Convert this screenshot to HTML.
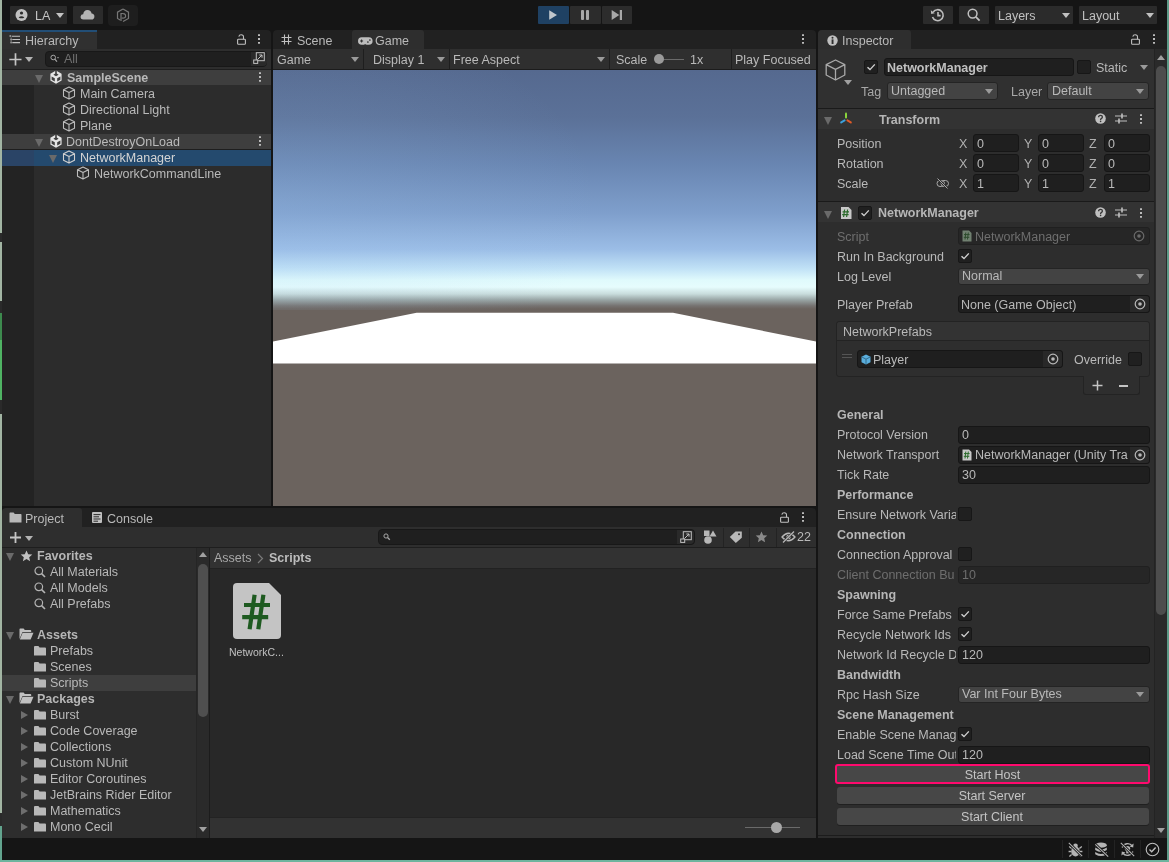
<!DOCTYPE html>
<html><head><meta charset="utf-8">
<style>
*{margin:0;padding:0;box-sizing:border-box}
html,body{width:1169px;height:862px;overflow:hidden;background:#151515}
body{position:relative;will-change:transform;font-family:"Liberation Sans",sans-serif;font-size:12.5px;color:#b9b9b9}
.a{position:absolute}
.t{position:absolute;white-space:nowrap;line-height:18px}
.b{font-weight:bold;color:#b6b6b6}
.btn{position:absolute;background:#2c2c2c;border-radius:1px}
.tri{position:absolute;width:0;height:0;border-left:4px solid transparent;border-right:4px solid transparent;border-top:5px solid #9a9a9a}
.trir{position:absolute;width:0;height:0;border-top:4.5px solid transparent;border-bottom:4.5px solid transparent;border-left:7px solid #6e6e6e}
.trid{position:absolute;width:0;height:0;border-left:4.5px solid transparent;border-right:4.5px solid transparent;border-top:8px solid #6a6a6a;margin-top:1px}
.fld{position:absolute;background:#1f1f1f;border-radius:3px;border:1px solid #161616}
.dd{position:absolute;background:#434343;border-radius:3px;border:1px solid #242424}
.cb{position:absolute;width:14px;height:14px;background:#202020;border:1px solid #171717;border-radius:2px}
.dots{position:absolute;width:2px;height:10px;margin-left:0.5px;background:repeating-linear-gradient(180deg,#bcbcbc 0 2px,transparent 2px 4px);border-radius:1px}
svg{position:absolute;overflow:visible}
</style></head><body>
<!-- window borders -->
<div class="a" style="left:0;top:0;width:2px;height:862px;background:linear-gradient(180deg,#a2b5a3 0 233px,#2a2a2a 233px 242px,#a2b5a3 242px 301px,#2a2a2a 301px 313px,#3d8a4e 313px 340px,#4fb363 340px 400px,#2a2a2a 400px 414px,#a2b5a3 414px 813px,#2a2a2a 813px 826px,#62a48e 826px 862px)"></div>
<div class="a" style="left:1167px;top:0;width:2px;height:862px;background:#5e9a88"></div>
<div class="a" style="left:0;top:860px;width:1169px;height:2px;background:#6db49e"></div>

<!-- MAIN TOOLBAR -->
<div id="toolbar">
<div class="btn" style="left:10px;top:6px;width:57px;height:18px;background:#2b2b2b"></div>
<svg style="left:15px;top:8px" width="14" height="14" viewBox="0 0 14 14"><circle cx="6.5" cy="7" r="6" fill="#c2c2c2"/><circle cx="6.5" cy="5" r="1.6" fill="#2b2b2b"/><path d="M3.6 9.4 Q6.5 7.2 9.4 9.4 Q6.5 11.2 3.6 9.4Z" fill="#2b2b2b"/></svg>
<div class="t" style="left:35px;top:7px;color:#c4c4c4">LA</div>
<div class="tri" style="left:56px;top:13px;border-top-color:#c4c4c4"></div>
<div class="btn" style="left:73px;top:6px;width:30px;height:18px;background:#2b2b2b"></div>
<svg style="left:80px;top:9px" width="15" height="11" viewBox="0 0 15 11"><path d="M3.5 10.5 Q0.3 10.5 0.6 7.6 Q0.9 5.2 3.2 5.3 Q3.6 1 7.5 0.9 Q11 1 11.6 4.6 Q14.5 4.8 14.4 7.7 Q14.2 10.5 11.5 10.5Z" fill="#b4b4b4"/></svg>
<div class="btn" style="left:108px;top:5px;width:30px;height:21px;background:#1e1e1e;border-radius:4px"></div>
<svg style="left:116px;top:8px" width="14" height="15" viewBox="0 0 14 15"><path d="M7 1 L12.5 4.2 L12.5 10.5 L7 13.6 M4.2 12 L1.5 10.5 L1.5 4.2 L7 1" fill="none" stroke="#777" stroke-width="1.2"/><path d="M5 13 L5 5.6 Q9.6 5 9.6 8 Q9.6 10.6 5.8 10" fill="none" stroke="#777" stroke-width="1.2"/></svg>

<div class="btn" style="left:538px;top:6px;width:31px;height:18px;background:#1f4163"></div>
<svg style="left:547px;top:9px" width="12" height="12" viewBox="0 0 12 12"><path d="M2.2 1.2 L10 6 L2.2 10.8Z" fill="#c0c6cc"/></svg>
<div class="btn" style="left:570px;top:6px;width:31px;height:18px;background:#2c2c2c"></div>
<div class="a" style="left:581px;top:10px;width:2.6px;height:10px;background:#a8a8a8;border-radius:1px"></div>
<div class="a" style="left:586.4px;top:10px;width:2.6px;height:10px;background:#a8a8a8;border-radius:1px"></div>
<div class="btn" style="left:602px;top:6px;width:30px;height:18px;background:#2c2c2c"></div>
<svg style="left:611px;top:9px" width="12" height="12" viewBox="0 0 12 12"><path d="M0.7 1 L8.3 6 L0.7 11Z" fill="#a8a8a8"/><rect x="8.8" y="1" width="2.2" height="10" fill="#a8a8a8"/></svg>

<div class="btn" style="left:923px;top:6px;width:30px;height:18px;background:#2b2b2b"></div>
<svg style="left:930px;top:8px" width="15" height="14" viewBox="0 0 15 14"><path d="M3.2 4 A5.5 5.5 0 1 1 2.5 9" fill="none" stroke="#bdbdbd" stroke-width="1.6"/><path d="M0.8 2.2 L1.2 6 L4.8 5.2Z" fill="#bdbdbd"/><path d="M8 4 L8 7.6 L10.6 7.6" fill="none" stroke="#bdbdbd" stroke-width="1.6"/></svg>
<div class="btn" style="left:959px;top:6px;width:30px;height:18px;background:#2b2b2b"></div>
<svg style="left:967px;top:8px" width="14" height="14" viewBox="0 0 14 14"><circle cx="5.6" cy="5.6" r="4.4" fill="none" stroke="#c0c0c0" stroke-width="1.5"/><path d="M8.8 8.8 L12.6 12.6" stroke="#c0c0c0" stroke-width="1.8"/></svg>
<div class="btn" style="left:995px;top:6px;width:78px;height:18px;background:#2b2b2b"></div>
<div class="t" style="left:998px;top:7px;color:#c0c0c0">Layers</div>
<div class="tri" style="left:1062px;top:13px;border-top-color:#c0c0c0"></div>
<div class="btn" style="left:1079px;top:6px;width:78px;height:18px;background:#2b2b2b"></div>
<div class="t" style="left:1082px;top:7px;color:#c0c0c0">Layout</div>
<div class="tri" style="left:1146px;top:13px;border-top-color:#c0c0c0"></div>
</div>

<!-- HIERARCHY -->
<div id="hier">
<div class="a" style="left:2px;top:30px;width:269px;height:19px;background:#212121;border-radius:4px 4px 0 0"></div>
<div class="a" style="left:2px;top:30px;width:95px;height:19px;background:#303030;border-top:2px solid #224e76"></div>
<svg style="left:9px;top:34px" width="12" height="11" viewBox="0 0 12 11"><path d="M2.8 2.2H11M3.3 5.5H11M3.3 8.6H11" stroke="#c0c0c0" stroke-width="1.1"/><path d="M0.3 2H2.3M1.3 1V3M2.1 3.5V9.6M1.3 5.5H2.9M1.3 8.6H2.9" stroke="#a8a8a8" stroke-width="0.8"/></svg>
<div class="t" style="left:25px;top:32px">Hierarchy</div>
<svg style="left:237px;top:34px" width="9" height="11" viewBox="0 0 9 11"><path d="M6.5 5.3V3Q6.5 0.8 4.2 0.8Q2.2 0.8 1.8 2.6" fill="none" stroke="#c0c0c0" stroke-width="1.1"/><rect x="0.6" y="5.3" width="7.8" height="5" rx="0.8" fill="none" stroke="#c0c0c0" stroke-width="1.1"/></svg>
<div class="dots" style="left:257px;top:34px"></div>
<div class="a" style="left:2px;top:49px;width:269px;height:20px;background:#2e2e2e"></div>
<svg style="left:8.5px;top:52.5px" width="13" height="13" viewBox="0 0 13 13"><path d="M6.5 0.3V12.5M0.3 6.5H12.5" stroke="#c4c4c4" stroke-width="1.7"/></svg>
<div class="tri" style="left:25px;top:57px;border-top-color:#b4b4b4"></div>
<div class="a" style="left:45px;top:51px;width:222px;height:16px;background:#1f1f1f;border-radius:4px;border:1px solid #181818"></div>
<div class="a" style="left:251px;top:52px;width:16px;height:14px;background:#2a2a2a;border-radius:0 4px 4px 0"></div>
<svg style="left:50px;top:54px" width="10" height="9" viewBox="0 0 10 9"><circle cx="3.2" cy="3.5" r="2.3" fill="none" stroke="#a8a8a8" stroke-width="1"/><path d="M4.8 5.2L7 7.6" stroke="#a8a8a8" stroke-width="1.2"/><path d="M6.8 3.2H9.2L8 4.6Z" fill="#a8a8a8"/></svg>
<div class="t" style="left:64px;top:50px;color:#707070">All</div>
<svg style="left:253px;top:52px" width="12" height="12" viewBox="0 0 12 12"><rect x="3.3" y="0.7" width="8" height="8" fill="none" stroke="#c0c0c0" stroke-width="1"/><rect x="0.7" y="8" width="4" height="3.4" fill="#2a2a2a" stroke="#c0c0c0" stroke-width="1"/><path d="M4.5 7.5L9 3M6.3 3H9V5.7" fill="none" stroke="#c0c0c0" stroke-width="1"/></svg>

<div class="a" style="left:2px;top:69px;width:269px;height:437px;background:#2c2c2c"></div>
<div class="a" style="left:2px;top:69px;width:269px;height:16px;background:#3e3e3e;border-top:1px solid #1e1e1e"></div>
<div class="a" style="left:2px;top:134px;width:269px;height:16px;background:#3e3e3e;border-bottom:1px solid #1e1e1e"></div>
<div class="a" style="left:2px;top:85px;width:32px;height:49px;background:#232323"></div>
<div class="a" style="left:2px;top:150px;width:269px;height:16px;background:#244a6e"></div>
<div class="a" style="left:2px;top:150px;width:32px;height:16px;background:#2a4466"></div>
<div class="a" style="left:2px;top:166px;width:32px;height:340px;background:#232323"></div>
<div class="trid" style="left:35px;top:74px"></div>
<div class="trid" style="left:35px;top:138px"></div>
<div class="trid" style="left:49px;top:154px"></div>
<svg style="left:49px;top:70px" width="14" height="14" viewBox="0 0 14 14"><path d="M7 0.6L12.6 3.8V10.4L7 13.8L1.4 10.4V3.8Z" fill="#e4e4e4"/><path d="M6.2 0H7.8V3.6L9.6 4.8L7 6.2L4.4 4.8L6.2 3.6Z" fill="#3e3e3e"/><path d="M2.6 6.4L5.8 8.2V11.6L2.6 9.8Z M11.4 6.4L8.2 8.2V11.6L11.4 9.8Z" fill="#3e3e3e"/></svg>
<svg style="left:49px;top:134px" width="14" height="14" viewBox="0 0 14 14"><path d="M7 0.6L12.6 3.8V10.4L7 13.8L1.4 10.4V3.8Z" fill="#e4e4e4"/><path d="M6.2 0H7.8V3.6L9.6 4.8L7 6.2L4.4 4.8L6.2 3.6Z" fill="#3e3e3e"/><path d="M2.6 6.4L5.8 8.2V11.6L2.6 9.8Z M11.4 6.4L8.2 8.2V11.6L11.4 9.8Z" fill="#3e3e3e"/></svg>
<div class="t b" style="left:67px;top:69px;color:#b8b8b8">SampleScene</div>
<div class="t" style="left:66px;top:133px;color:#bababa">DontDestroyOnLoad</div>
<div class="dots" style="left:258px;top:72px"></div>
<div class="dots" style="left:258px;top:136px"></div>
<svg style="left:62px;top:86px" width="14" height="14" viewBox="0 0 14 14"><path d="M7 1L12.5 3.8V10.2L7 13L1.5 10.2V3.8Z M1.5 3.8L7 6.6L12.5 3.8 M7 6.6V13" fill="none" stroke="#bdbdbd" stroke-width="1.1" stroke-linejoin="round"/></svg>
<svg style="left:62px;top:102px" width="14" height="14" viewBox="0 0 14 14"><path d="M7 1L12.5 3.8V10.2L7 13L1.5 10.2V3.8Z M1.5 3.8L7 6.6L12.5 3.8 M7 6.6V13" fill="none" stroke="#bdbdbd" stroke-width="1.1" stroke-linejoin="round"/></svg>
<svg style="left:62px;top:118px" width="14" height="14" viewBox="0 0 14 14"><path d="M7 1L12.5 3.8V10.2L7 13L1.5 10.2V3.8Z M1.5 3.8L7 6.6L12.5 3.8 M7 6.6V13" fill="none" stroke="#bdbdbd" stroke-width="1.1" stroke-linejoin="round"/></svg>
<svg style="left:62px;top:150px" width="14" height="14" viewBox="0 0 14 14"><path d="M7 1L12.5 3.8V10.2L7 13L1.5 10.2V3.8Z M1.5 3.8L7 6.6L12.5 3.8 M7 6.6V13" fill="none" stroke="#d0d0d0" stroke-width="1.1" stroke-linejoin="round"/></svg>
<svg style="left:76px;top:166px" width="14" height="14" viewBox="0 0 14 14"><path d="M7 1L12.5 3.8V10.2L7 13L1.5 10.2V3.8Z M1.5 3.8L7 6.6L12.5 3.8 M7 6.6V13" fill="none" stroke="#bdbdbd" stroke-width="1.1" stroke-linejoin="round"/></svg>
<div class="t" style="left:80px;top:85px">Main Camera</div>
<div class="t" style="left:80px;top:101px">Directional Light</div>
<div class="t" style="left:80px;top:117px">Plane</div>
<div class="t" style="left:80px;top:149px;color:#d4d4d4">NetworkManager</div>
<div class="t" style="left:94px;top:165px">NetworkCommandLine</div>
</div>

<!-- GAME -->
<div id="game">
<div class="a" style="left:273px;top:30px;width:543px;height:19px;background:#212121;border-radius:4px 4px 0 0"></div>
<div class="a" style="left:352px;top:30px;width:72px;height:19px;background:#2e2e2e;border-radius:3px 3px 0 0"></div>
<svg style="left:281px;top:34px" width="11" height="11" viewBox="0 0 11 11"><path d="M3.5 0.5V10.5M7.5 0.5V10.5M0.5 3.5H10.5M0.5 7.5H10.5" stroke="#c0c0c0" stroke-width="1.1"/></svg>
<div class="t" style="left:297px;top:32px">Scene</div>
<svg style="left:357.5px;top:36.6px" width="15" height="8" viewBox="0 0 15 8"><path d="M3.8 0.2H10.8A3.8 3.8 0 0 1 10.8 7.8H8.4L7.9 7.2H6.6L6.1 7.8H3.8A3.8 3.8 0 0 1 3.8 0.2Z" fill="#bdbdbd"/><path d="M2.1 4H5.1M3.6 2.5V5.5" stroke="#2e2e2e" stroke-width="1"/><circle cx="9.9" cy="5" r="0.85" fill="#2e2e2e"/><circle cx="11.9" cy="3" r="0.85" fill="#2e2e2e"/></svg>
<div class="t" style="left:375px;top:32px">Game</div>
<div class="dots" style="left:801px;top:34px"></div>
<div class="a" style="left:273px;top:49px;width:543px;height:21px;background:#2f2f2f;border-bottom:1px solid #1c1c1c"></div>
<div class="a" style="left:363px;top:49px;width:1px;height:20px;background:#1e1e1e"></div>
<div class="a" style="left:449px;top:49px;width:1px;height:20px;background:#1e1e1e"></div>
<div class="a" style="left:609px;top:49px;width:1px;height:20px;background:#1e1e1e"></div>
<div class="a" style="left:731px;top:49px;width:1px;height:20px;background:#1e1e1e"></div>
<div class="t" style="left:277px;top:51px">Game</div>
<div class="tri" style="left:351px;top:57px"></div>
<div class="t" style="left:373px;top:51px">Display 1</div>
<div class="tri" style="left:437px;top:57px"></div>
<div class="t" style="left:453px;top:51px">Free Aspect</div>
<div class="tri" style="left:597px;top:57px"></div>
<div class="t" style="left:616px;top:51px">Scale</div>
<div class="a" style="left:659px;top:59px;width:25px;height:1px;background:#6a6a6a"></div>
<div class="a" style="left:654px;top:54px;width:10px;height:10px;border-radius:5px;background:#9a9a9a"></div>
<div class="t" style="left:690px;top:51px">1x</div>
<div class="t" style="left:735px;top:51px">Play Focused</div>
<!-- viewport -->
<div class="a" style="left:273px;top:70px;width:543px;height:436px;background:#6b635e;overflow:hidden">
 <div class="a" style="left:0;top:0;width:543px;height:239px;background:linear-gradient(180deg,#55698f 0%,#5b7198 20%,#6986b2 40%,#7f9fcc 60%,#9bbde6 75%,#c0e1f6 83%,#e0fafc 87.9%,#e6fcfd 90.8%,#c8dcdc 93.7%,#98a4a4 96.2%,#757270 98.7%,#6b635e 100%)"></div><div class="a" style="left:0;top:0;width:543px;height:240px;background:radial-gradient(ellipse 60% 80% at 0% 55%,rgba(160,200,240,0.18),transparent)"></div>
 <svg style="left:0;top:0" width="543" height="437" viewBox="0 0 543 437"><path d="M0 271.5L143.6 242.8H400L543 271.5V293.6H0Z" fill="#ffffff"/></svg>
</div>
</div>

<!-- INSPECTOR -->
<div id="insp">
<div class="a" style="left:818px;top:30px;width:349px;height:19px;background:#212121;border-radius:4px 0 0 0"></div>
<div class="a" style="left:818px;top:30px;width:93px;height:19px;background:#2e2e2e;border-radius:4px 3px 0 0"></div>
<svg style="left:826.5px;top:34.6px" width="11" height="11" viewBox="0 0 11 11"><circle cx="5.5" cy="5.5" r="5.2" fill="#c0c0c0"/><rect x="4.6" y="4.4" width="1.9" height="4.6" fill="#2e2e2e"/><circle cx="5.5" cy="2.7" r="1" fill="#2e2e2e"/></svg>
<div class="t" style="left:842px;top:32px">Inspector</div>
<svg style="left:1131px;top:34px" width="9" height="11" viewBox="0 0 9 11"><path d="M6.5 5.3V3Q6.5 0.8 4.2 0.8Q2.2 0.8 1.8 2.6" fill="none" stroke="#c0c0c0" stroke-width="1.1"/><rect x="0.6" y="5.3" width="7.8" height="5" rx="0.8" fill="none" stroke="#c0c0c0" stroke-width="1.1"/></svg>
<div class="dots" style="left:1152px;top:34px"></div>
<!-- content bg -->
<div class="a" style="left:818px;top:49px;width:349px;height:789px;background:#2d2d2d"></div>
<div class="a" style="left:818px;top:49px;width:336px;height:59px;background:#303030"></div>
<!-- scrollbar -->
<div class="a" style="left:1154px;top:49px;width:13px;height:789px;background:#2a2a2a;border-left:1px solid #232323"></div>
<div class="a" style="left:1157px;top:55px;width:0;height:0;border-left:4px solid transparent;border-right:4px solid transparent;border-bottom:5px solid #a0a0a0"></div>
<div class="a" style="left:1156px;top:66px;width:10px;height:549px;background:#4d4d4d;border-radius:5px"></div>
<div class="a" style="left:1157px;top:828px;width:0;height:0;border-left:4px solid transparent;border-right:4px solid transparent;border-top:5px solid #a0a0a0"></div>
<!-- object header -->
<svg style="left:825px;top:59px" width="21" height="22" viewBox="0 0 21 22"><path d="M10.5 1L19.8 5.6V16L10.5 21L1.2 16V5.6Z M1.2 5.6L10.5 10.4L19.8 5.6 M10.5 10.4V21" fill="none" stroke="#a9a9a9" stroke-width="1.3" stroke-linejoin="round"/></svg>
<div class="a" style="left:844px;top:80px;width:0;height:0;border-left:4px solid transparent;border-right:4px solid transparent;border-top:5px solid #a0a0a0"></div>
<div class="cb" style="left:864px;top:60px"></div>
<svg style="left:866px;top:62px" width="10" height="10" viewBox="0 0 10 10"><path d="M1.5 5.2L4 7.6L8.8 2.4" fill="none" stroke="#d0d0d0" stroke-width="1.4"/></svg>
<div class="fld" style="left:884px;top:58px;width:190px;height:18px"></div>
<div class="t b" style="left:887px;top:59px;color:#c0c0c0">NetworkManager</div>
<div class="cb" style="left:1077px;top:60px"></div>
<div class="t" style="left:1096px;top:59px">Static</div>
<div class="tri" style="left:1140px;top:65px"></div>
<div class="t" style="left:861px;top:83px;color:#a8a8a8">Tag</div>
<div class="dd" style="left:887px;top:82px;width:111px;height:18px"></div>
<div class="t" style="left:891px;top:82px">Untagged</div>
<div class="tri" style="left:985px;top:89px"></div>
<div class="t" style="left:1011px;top:83px;color:#a8a8a8">Layer</div>
<div class="dd" style="left:1047px;top:82px;width:102px;height:18px"></div>
<div class="t" style="left:1052px;top:82px">Default</div>
<div class="tri" style="left:1136px;top:89px"></div>
<!-- transform -->
<div class="a" style="left:818px;top:108px;width:336px;height:1px;background:#1a1a1a"></div>
<div class="a" style="left:818px;top:109px;width:336px;height:20px;background:#333333"></div>
<div class="trid" style="left:824px;top:116px"></div>
<svg style="left:839px;top:112px" width="14" height="14" viewBox="0 0 14 14"><path d="M7 1.5V5.6" stroke="#8ad43c" stroke-width="2" stroke-linecap="round"/><path d="M5.6 8.4L2.2 10.4" stroke="#3ca0dc" stroke-width="2" stroke-linecap="round"/><path d="M8.4 8.4L11.8 10.4" stroke="#e05a28" stroke-width="2" stroke-linecap="round"/></svg>
<div class="t b" style="left:879px;top:111px">Transform</div>
<svg style="left:1095px;top:113px" width="11" height="11" viewBox="0 0 11 11"><circle cx="5.5" cy="5.5" r="5.3" fill="#c0c0c0"/><path d="M3.6 4.2Q3.6 2.4 5.5 2.4Q7.4 2.4 7.4 4Q7.4 5 6.2 5.6Q5.6 5.9 5.6 7" fill="none" stroke="#353535" stroke-width="1.3"/><circle cx="5.6" cy="8.4" r="0.8" fill="#353535"/></svg>
<svg style="left:1115px;top:113px" width="12" height="11" viewBox="0 0 12 11"><path d="M0 3H12M0 8H12" stroke="#c0c0c0" stroke-width="1.2"/><path d="M7 0.5V5.5M4 5.5V10.5" stroke="#c0c0c0" stroke-width="1.6"/></svg>
<div class="dots" style="left:1139px;top:114px"></div>
<div class="t" style="left:837px;top:135px">Position</div>
<div class="t" style="left:959px;top:135px;color:#b0b0b0">X</div>
<div class="fld" style="left:973px;top:134px;width:46px;height:18px"></div>
<div class="t" style="left:977px;top:135px">0</div>
<div class="t" style="left:1024px;top:135px;color:#b0b0b0">Y</div>
<div class="fld" style="left:1038px;top:134px;width:46px;height:18px"></div>
<div class="t" style="left:1042px;top:135px">0</div>
<div class="t" style="left:1089px;top:135px;color:#b0b0b0">Z</div>
<div class="fld" style="left:1104px;top:134px;width:46px;height:18px"></div>
<div class="t" style="left:1108px;top:135px">0</div>
<div class="t" style="left:837px;top:155px">Rotation</div>
<div class="t" style="left:959px;top:155px;color:#b0b0b0">X</div>
<div class="fld" style="left:973px;top:154px;width:46px;height:18px"></div>
<div class="t" style="left:977px;top:155px">0</div>
<div class="t" style="left:1024px;top:155px;color:#b0b0b0">Y</div>
<div class="fld" style="left:1038px;top:154px;width:46px;height:18px"></div>
<div class="t" style="left:1042px;top:155px">0</div>
<div class="t" style="left:1089px;top:155px;color:#b0b0b0">Z</div>
<div class="fld" style="left:1104px;top:154px;width:46px;height:18px"></div>
<div class="t" style="left:1108px;top:155px">0</div>
<div class="t" style="left:837px;top:175px">Scale</div>
<div class="t" style="left:959px;top:175px;color:#b0b0b0">X</div>
<div class="fld" style="left:973px;top:174px;width:46px;height:18px"></div>
<div class="t" style="left:977px;top:175px">1</div>
<div class="t" style="left:1024px;top:175px;color:#b0b0b0">Y</div>
<div class="fld" style="left:1038px;top:174px;width:46px;height:18px"></div>
<div class="t" style="left:1042px;top:175px">1</div>
<div class="t" style="left:1089px;top:175px;color:#b0b0b0">Z</div>
<div class="fld" style="left:1104px;top:174px;width:46px;height:18px"></div>
<div class="t" style="left:1108px;top:175px">1</div>
<svg style="left:936px;top:178px" width="14" height="11" viewBox="0 0 14 11"><rect x="1" y="2.5" width="7.5" height="6" rx="3" fill="none" stroke="#a8a8a8" stroke-width="1"/><rect x="5" y="2.5" width="7.5" height="6" rx="3" fill="none" stroke="#a8a8a8" stroke-width="1"/><path d="M1.5 0.5L11.5 10.5" stroke="#2b2b2b" stroke-width="2"/><path d="M1.5 0.5L11.5 10.5" stroke="#a8a8a8" stroke-width="1"/></svg>
<div class="a" style="left:818px;top:201px;width:336px;height:1px;background:#1a1a1a"></div>
<div class="a" style="left:818px;top:202px;width:336px;height:20px;background:#333333"></div>
<div class="trid" style="left:824px;top:210px"></div>
<svg style="left:840px;top:206px" width="12" height="14" viewBox="0 0 12 14"><path d="M1 1H8.5L11.5 4V13H1Z" fill="#c8c8c8"/><path d="M4.6 3.5L3.6 11M7.6 3.5L6.6 11M2.6 5.8H9M2.2 8.6H8.6" stroke="#2a6a2a" stroke-width="1.2"/></svg>
<div class="cb" style="left:858px;top:206px"></div>
<svg style="left:860px;top:208px" width="10" height="10" viewBox="0 0 10 10"><path d="M1.5 5.2L4 7.6L8.8 2.4" fill="none" stroke="#d0d0d0" stroke-width="1.4"/></svg>
<div class="t b" style="left:878px;top:204px">NetworkManager</div>
<svg style="left:1095px;top:207px" width="11" height="11" viewBox="0 0 11 11"><circle cx="5.5" cy="5.5" r="5.3" fill="#c0c0c0"/><path d="M3.6 4.2Q3.6 2.4 5.5 2.4Q7.4 2.4 7.4 4Q7.4 5 6.2 5.6Q5.6 5.9 5.6 7" fill="none" stroke="#353535" stroke-width="1.3"/><circle cx="5.6" cy="8.4" r="0.8" fill="#353535"/></svg>
<svg style="left:1115px;top:207px" width="12" height="11" viewBox="0 0 12 11"><path d="M0 3H12M0 8H12" stroke="#c0c0c0" stroke-width="1.2"/><path d="M7 0.5V5.5M4 5.5V10.5" stroke="#c0c0c0" stroke-width="1.6"/></svg>
<div class="dots" style="left:1139px;top:208px"></div>
<div class="t" style="left:837px;top:228px;color:#6e6e6e">Script</div>
<div class="fld" style="left:958px;top:227px;width:192px;height:18px;background:#262626;border-color:#202020"></div>
<svg style="left:962px;top:230px" width="10" height="12" viewBox="0 0 10 12"><path d="M0.5 0.5H7L9.5 3V11.5H0.5Z" fill="#708070"/><path d="M3.8 2.5L3 9.5M6.3 2.5L5.5 9.5M2 4.6H7.6M1.8 7.3H7.3" stroke="#2c4a2c" stroke-width="1"/></svg>
<div class="t" style="left:975px;top:228px;color:#6e6e6e">NetworkManager</div>
<svg style="left:1133px;top:230px" width="12" height="12" viewBox="0 0 12 12"><circle cx="6" cy="6" r="4.8" fill="none" stroke="#6a6a6a" stroke-width="1.2"/><circle cx="6" cy="6" r="1.8" fill="#6a6a6a"/></svg>
<div class="t" style="left:837px;top:248px">Run In Background</div>
<div class="cb" style="left:958px;top:249px"></div><svg style="left:960px;top:251px" width="10" height="10" viewBox="0 0 10 10"><path d="M1.5 5.2L4 7.6L8.8 2.4" fill="none" stroke="#d0d0d0" stroke-width="1.4"/></svg>
<div class="t" style="left:837px;top:268px">Log Level</div>
<div class="dd" style="left:958px;top:268px;width:192px;height:17px"></div>
<div class="t" style="left:962px;top:267px">Normal</div>
<div class="tri" style="left:1136px;top:274px"></div>
<div class="t" style="left:837px;top:296px">Player Prefab</div>
<div class="fld" style="left:958px;top:295px;width:192px;height:18px"></div><div class="a" style="left:1130px;top:296px;width:19px;height:16px;background:#282828;border-radius:0 3px 3px 0"></div><svg style="left:1134px;top:298px" width="12" height="12" viewBox="0 0 12 12"><circle cx="6" cy="6" r="4.8" fill="none" stroke="#b8b8b8" stroke-width="1.2"/><circle cx="6" cy="6" r="1.8" fill="#b8b8b8"/></svg>
<div class="t" style="left:961px;top:296px">None (Game Object)</div>
<div class="a" style="left:836px;top:321px;width:314px;height:56px;background:#2e2e2e;border:1px solid #232323;border-radius:3px"></div>
<div class="a" style="left:837px;top:322px;width:312px;height:19px;background:#333333;border-bottom:1px solid #232323;border-radius:3px 3px 0 0"></div>
<div class="t" style="left:843px;top:323px">NetworkPrefabs</div>
<div class="a" style="left:842px;top:354px;width:10px;height:1px;background:#555"></div>
<div class="a" style="left:842px;top:357px;width:10px;height:1px;background:#555"></div>
<div class="fld" style="left:857px;top:350px;width:206px;height:18px"></div><div class="a" style="left:1043px;top:351px;width:19px;height:16px;background:#282828;border-radius:0 3px 3px 0"></div><svg style="left:1047px;top:353px" width="12" height="12" viewBox="0 0 12 12"><circle cx="6" cy="6" r="4.8" fill="none" stroke="#b8b8b8" stroke-width="1.2"/><circle cx="6" cy="6" r="1.8" fill="#b8b8b8"/></svg>
<svg style="left:861px;top:354px" width="10" height="11" viewBox="0 0 10 11"><path d="M5 0.5L9.5 2.8V8.2L5 10.5L0.5 8.2V2.8Z" fill="#5aaedc"/><path d="M0.5 2.8L5 5.2L9.5 2.8M5 5.2V10.5" fill="none" stroke="#2a5a7a" stroke-width="0.8"/></svg>
<div class="t" style="left:873px;top:351px">Player</div>
<div class="t" style="left:1074px;top:351px">Override</div>
<div class="cb" style="left:1128px;top:352px"></div>
<div class="a" style="left:1083px;top:376px;width:57px;height:19px;background:#2e2e2e;border:1px solid #232323;border-top:none;border-radius:0 0 3px 3px"></div>
<svg style="left:1092px;top:380px" width="11" height="11" viewBox="0 0 11 11"><path d="M5.5 0.5V10.5M0.5 5.5H10.5" stroke="#c4c4c4" stroke-width="1.5"/></svg>
<div class="a" style="left:1119px;top:385px;width:9px;height:1.5px;background:#c4c4c4"></div>
<div class="t b" style="left:837px;top:406px">General</div>
<div class="t" style="left:837px;top:426px;width:119px;overflow:hidden">Protocol Version</div>
<div class="fld" style="left:958px;top:426px;width:192px;height:18px"></div>
<div class="t" style="left:962px;top:426px">0</div>
<div class="t" style="left:837px;top:446px;width:119px;overflow:hidden">Network Transport</div>
<div class="fld" style="left:958px;top:446px;width:192px;height:18px"></div><div class="a" style="left:1130px;top:447px;width:19px;height:16px;background:#282828;border-radius:0 3px 3px 0"></div><svg style="left:1134px;top:449px" width="12" height="12" viewBox="0 0 12 12"><circle cx="6" cy="6" r="4.8" fill="none" stroke="#b8b8b8" stroke-width="1.2"/><circle cx="6" cy="6" r="1.8" fill="#b8b8b8"/></svg>
<svg style="left:962px;top:449px" width="10" height="12" viewBox="0 0 10 12"><path d="M0.5 0.5H7L9.5 3V11.5H0.5Z" fill="#c8c8c8"/><path d="M3.8 2.5L3 9.5M6.3 2.5L5.5 9.5M2 4.6H7.6M1.8 7.3H7.3" stroke="#2a6a2a" stroke-width="1"/></svg>
<div class="t" style="left:975px;top:446px;width:155px;overflow:hidden">NetworkManager (Unity Tra</div>
<div class="t" style="left:837px;top:466px;width:119px;overflow:hidden">Tick Rate</div>
<div class="fld" style="left:958px;top:466px;width:192px;height:18px"></div>
<div class="t" style="left:962px;top:466px">30</div>
<div class="t b" style="left:837px;top:486px">Performance</div>
<div class="t" style="left:837px;top:506px;width:119px;overflow:hidden">Ensure Network Varia</div>
<div class="cb" style="left:958px;top:507px"></div>
<div class="t b" style="left:837px;top:526px">Connection</div>
<div class="t" style="left:837px;top:546px;width:119px;overflow:hidden">Connection Approval</div>
<div class="cb" style="left:958px;top:547px"></div>
<div class="t" style="left:837px;top:566px;color:#6e6e6e;width:119px;overflow:hidden">Client Connection Bu</div>
<div class="fld" style="left:958px;top:566px;width:192px;height:18px;background:#262626;border-color:#202020"></div>
<div class="t" style="left:962px;top:566px;color:#6e6e6e">10</div>
<div class="t b" style="left:837px;top:586px">Spawning</div>
<div class="t" style="left:837px;top:606px;width:119px;overflow:hidden">Force Same Prefabs</div>
<div class="cb" style="left:958px;top:607px"></div><svg style="left:960px;top:609px" width="10" height="10" viewBox="0 0 10 10"><path d="M1.5 5.2L4 7.6L8.8 2.4" fill="none" stroke="#d0d0d0" stroke-width="1.4"/></svg>
<div class="t" style="left:837px;top:626px;width:119px;overflow:hidden">Recycle Network Ids</div>
<div class="cb" style="left:958px;top:627px"></div><svg style="left:960px;top:629px" width="10" height="10" viewBox="0 0 10 10"><path d="M1.5 5.2L4 7.6L8.8 2.4" fill="none" stroke="#d0d0d0" stroke-width="1.4"/></svg>
<div class="t" style="left:837px;top:646px;width:119px;overflow:hidden">Network Id Recycle D</div>
<div class="fld" style="left:958px;top:646px;width:192px;height:18px"></div>
<div class="t" style="left:962px;top:646px">120</div>
<div class="t b" style="left:837px;top:666px">Bandwidth</div>
<div class="t" style="left:837px;top:686px;width:119px;overflow:hidden">Rpc Hash Size</div>
<div class="dd" style="left:958px;top:686px;width:192px;height:17px"></div>
<div class="t" style="left:962px;top:685px">Var Int Four Bytes</div>
<div class="tri" style="left:1136px;top:692px"></div>
<div class="t b" style="left:837px;top:706px">Scene Management</div>
<div class="t" style="left:837px;top:726px;width:119px;overflow:hidden">Enable Scene Manag</div>
<div class="cb" style="left:958px;top:727px"></div><svg style="left:960px;top:729px" width="10" height="10" viewBox="0 0 10 10"><path d="M1.5 5.2L4 7.6L8.8 2.4" fill="none" stroke="#d0d0d0" stroke-width="1.4"/></svg>
<div class="t" style="left:837px;top:746px;width:119px;overflow:hidden">Load Scene Time Out</div>
<div class="fld" style="left:958px;top:746px;width:192px;height:18px"></div>
<div class="t" style="left:962px;top:746px">120</div>
<div class="a" style="left:835px;top:764px;width:315px;height:20px;background:#474747;border:2px solid #ff0a6e;border-radius:3px"></div>
<div class="t" style="left:835px;top:766px;width:315px;text-align:center;color:#c4c4c4">Start Host</div>
<div class="a" style="left:837px;top:787px;width:312px;height:17px;background:#474747;border-radius:3px;box-shadow:0 1px 0 #202020"></div>
<div class="t" style="left:836px;top:787px;width:312px;text-align:center;color:#c4c4c4">Start Server</div>
<div class="a" style="left:837px;top:808px;width:312px;height:17px;background:#474747;border-radius:3px;box-shadow:0 1px 0 #202020"></div>
<div class="t" style="left:836px;top:808px;width:312px;text-align:center;color:#c4c4c4">Start Client</div>
<div class="a" style="left:818px;top:835px;width:336px;height:1px;background:#1c1c1c"></div>
</div>

<!-- PROJECT -->
<div id="proj">
<div class="a" style="left:2px;top:508px;width:814px;height:19px;background:#212121;border-radius:4px 4px 0 0"></div>
<div class="a" style="left:2px;top:508px;width:80px;height:19px;background:#2e2e2e;border-radius:4px 3px 0 0"></div>
<svg style="left:9px;top:512px" width="13" height="11" viewBox="0 0 13 11"><path d="M0.5 1.2Q0.5 0.5 1.2 0.5H4.6L5.8 2H11.8Q12.5 2 12.5 2.7V10.5H0.5Z" fill="#b8b8b8"/></svg>
<div class="t" style="left:25px;top:510px">Project</div>
<svg style="left:92px;top:512px" width="10" height="11" viewBox="0 0 10 11"><rect x="0" y="0" width="10" height="11" rx="1" fill="#c0c0c0"/><path d="M1.5 2.6H8.5M1.5 4.8H7M1.5 7H8.5M1.5 9.2H6" stroke="#2e2e2e" stroke-width="1"/></svg>
<div class="t" style="left:107px;top:510px">Console</div>
<svg style="left:780px;top:512px" width="9" height="11" viewBox="0 0 9 11"><path d="M6.5 5.3V3Q6.5 0.8 4.2 0.8Q2.2 0.8 1.8 2.6" fill="none" stroke="#c0c0c0" stroke-width="1.1"/><rect x="0.6" y="5.3" width="7.8" height="5" rx="0.8" fill="none" stroke="#c0c0c0" stroke-width="1.1"/></svg>
<div class="dots" style="left:801px;top:512px"></div>
<div class="a" style="left:2px;top:527px;width:814px;height:21px;background:#2e2e2e;border-bottom:1px solid #1e1e1e"></div>
<svg style="left:9px;top:531px" width="13" height="13" viewBox="0 0 13 13"><path d="M6.5 1V12M1 6.5H12" stroke="#c4c4c4" stroke-width="1.8"/></svg>
<div class="tri" style="left:25px;top:536px;border-top-color:#b4b4b4"></div>
<div class="a" style="left:378px;top:529px;width:317px;height:16px;background:#1f1f1f;border-radius:4px;border:1px solid #181818"></div>
<div class="a" style="left:677px;top:530px;width:17px;height:14px;background:#2a2a2a;border-radius:0 4px 4px 0"></div>
<svg style="left:383px;top:533px" width="8" height="8" viewBox="0 0 8 8"><circle cx="3" cy="3" r="2.1" fill="none" stroke="#a8a8a8" stroke-width="1"/><path d="M4.5 4.5L6.8 6.8" stroke="#a8a8a8" stroke-width="1.3"/></svg>
<svg style="left:680px;top:531px" width="12" height="12" viewBox="0 0 12 12"><rect x="3.3" y="0.7" width="8" height="8" fill="none" stroke="#c0c0c0" stroke-width="1"/><rect x="0.7" y="8" width="4" height="3.4" fill="#2a2a2a" stroke="#c0c0c0" stroke-width="1"/><path d="M4.5 7.5L9 3M6.3 3H9V5.7" fill="none" stroke="#c0c0c0" stroke-width="1"/></svg>
<div class="a" style="left:723px;top:528px;width:1px;height:19px;background:#232323"></div>
<div class="a" style="left:749px;top:528px;width:1px;height:19px;background:#232323"></div>
<div class="a" style="left:776px;top:528px;width:1px;height:19px;background:#232323"></div>
<svg style="left:703px;top:530px" width="14" height="14" viewBox="0 0 14 14"><rect x="1" y="0.5" width="5.5" height="5.5" fill="#b8b8b8"/><path d="M10 0.5L13.5 6.5H6.5Z" fill="#b8b8b8"/><circle cx="5" cy="10" r="3.8" fill="#b8b8b8"/></svg>
<svg style="left:729px;top:531px" width="14" height="12" viewBox="0 0 14 12"><path d="M6.5 0.5H12.8V6.8L6.8 12L0.8 6Z" fill="#b8b8b8" transform="rotate(0)"/><circle cx="10" cy="3.2" r="1" fill="#2e2e2e"/></svg>
<svg style="left:755px;top:531px" width="13" height="12" viewBox="0 0 13 12"><path d="M6.5 0.5L8.2 4.2L12.3 4.5L9.2 7.2L10.1 11.3L6.5 9.1L2.9 11.3L3.8 7.2L0.7 4.5L4.8 4.2Z" fill="#8a8a8a"/></svg>
<svg style="left:781px;top:531px" width="15" height="12" viewBox="0 0 15 12"><path d="M1 6Q7.5 -1.5 14 6Q7.5 13.5 1 6Z" fill="none" stroke="#b8b8b8" stroke-width="1.3"/><circle cx="7.5" cy="6" r="2.2" fill="#b8b8b8"/><path d="M2 11.5L13 0.5" stroke="#2e2e2e" stroke-width="2.4"/><path d="M2 11.5L13 0.5" stroke="#b8b8b8" stroke-width="1.2"/></svg>
<div class="t" style="left:797px;top:528px">22</div>
<!-- left tree -->
<div class="a" style="left:2px;top:548px;width:194px;height:290px;background:#2d2d2d"></div>
<div class="a" style="left:196px;top:548px;width:13px;height:290px;background:#2a2a2a;border-left:1px solid #252525"></div>
<div class="a" style="left:199px;top:552px;width:0;height:0;border-left:4px solid transparent;border-right:4px solid transparent;border-bottom:5px solid #a0a0a0"></div>
<div class="a" style="left:198px;top:564px;width:10px;height:153px;background:#4f4f4f;border-radius:5px"></div>
<div class="a" style="left:199px;top:827px;width:0;height:0;border-left:4px solid transparent;border-right:4px solid transparent;border-top:5px solid #a0a0a0"></div>
<div class="a" style="left:209px;top:548px;width:1px;height:290px;background:#1c1c1c"></div>
<div class="a" style="left:2px;top:675px;width:194px;height:16px;background:#3e3e3e"></div>
<div class="trid" style="left:6px;top:552px"></div>
<svg style="left:19.5px;top:550px" width="13" height="12" viewBox="0 0 13 12"><path d="M6.5 0.5L8.2 4.2L12.3 4.5L9.2 7.2L10.1 11.3L6.5 9.1L2.9 11.3L3.8 7.2L0.7 4.5L4.8 4.2Z" fill="#c0c0c0"/></svg>
<div class="t b" style="left:37px;top:547px">Favorites</div>
<svg style="left:34px;top:566px" width="12" height="12" viewBox="0 0 12 12"><circle cx="4.8" cy="4.8" r="3.8" fill="none" stroke="#b4b4b4" stroke-width="1.2"/><path d="M7.6 7.6L11 11" stroke="#b4b4b4" stroke-width="1.6"/></svg>
<div class="t" style="left:50px;top:563px">All Materials</div>
<svg style="left:34px;top:582px" width="12" height="12" viewBox="0 0 12 12"><circle cx="4.8" cy="4.8" r="3.8" fill="none" stroke="#b4b4b4" stroke-width="1.2"/><path d="M7.6 7.6L11 11" stroke="#b4b4b4" stroke-width="1.6"/></svg>
<div class="t" style="left:50px;top:579px">All Models</div>
<svg style="left:34px;top:598px" width="12" height="12" viewBox="0 0 12 12"><circle cx="4.8" cy="4.8" r="3.8" fill="none" stroke="#b4b4b4" stroke-width="1.2"/><path d="M7.6 7.6L11 11" stroke="#b4b4b4" stroke-width="1.6"/></svg>
<div class="t" style="left:50px;top:595px">All Prefabs</div>
<svg style="left:34px;top:646px" width="12" height="10" viewBox="0 0 12 10"><path d="M0 1Q0 0 1 0H4.4L5.6 1.5H11Q12 1.5 12 2.5V9.5H0Z" fill="#b8b8b8"/></svg>
<div class="t" style="left:50px;top:642px">Prefabs</div>
<svg style="left:34px;top:662px" width="12" height="10" viewBox="0 0 12 10"><path d="M0 1Q0 0 1 0H4.4L5.6 1.5H11Q12 1.5 12 2.5V9.5H0Z" fill="#b8b8b8"/></svg>
<div class="t" style="left:50px;top:658px">Scenes</div>
<svg style="left:34px;top:678px" width="12" height="10" viewBox="0 0 12 10"><path d="M0 1Q0 0 1 0H4.4L5.6 1.5H11Q12 1.5 12 2.5V9.5H0Z" fill="#b8b8b8"/></svg>
<div class="t" style="left:50px;top:674px">Scripts</div>
<div class="trid" style="left:6px;top:631px"></div>
<svg style="left:19px;top:628px" width="15" height="12" viewBox="0 0 15 12"><path d="M0.5 1.2Q0.5 0.5 1.2 0.5H4.6L5.8 2H11.5Q12.2 2 12.2 2.7V4H3.5L0.5 11Z" fill="#c0c0c0"/><path d="M3.6 4.8H14.5L11.6 11.5H0.8Z" fill="#c0c0c0"/></svg>
<div class="t b" style="left:37px;top:626px">Assets</div>
<div class="trid" style="left:6px;top:695px"></div>
<svg style="left:19px;top:692px" width="15" height="12" viewBox="0 0 15 12"><path d="M0.5 1.2Q0.5 0.5 1.2 0.5H4.6L5.8 2H11.5Q12.2 2 12.2 2.7V4H3.5L0.5 11Z" fill="#c0c0c0"/><path d="M3.6 4.8H14.5L11.6 11.5H0.8Z" fill="#c0c0c0"/></svg>
<div class="t b" style="left:37px;top:690px">Packages</div>
<div class="trir" style="left:21px;top:711px"></div>
<svg style="left:34px;top:710px" width="12" height="10" viewBox="0 0 12 10"><path d="M0 1Q0 0 1 0H4.4L5.6 1.5H11Q12 1.5 12 2.5V9.5H0Z" fill="#b8b8b8"/></svg>
<div class="t" style="left:50px;top:706px">Burst</div>
<div class="trir" style="left:21px;top:727px"></div>
<svg style="left:34px;top:726px" width="12" height="10" viewBox="0 0 12 10"><path d="M0 1Q0 0 1 0H4.4L5.6 1.5H11Q12 1.5 12 2.5V9.5H0Z" fill="#b8b8b8"/></svg>
<div class="t" style="left:50px;top:722px">Code Coverage</div>
<div class="trir" style="left:21px;top:743px"></div>
<svg style="left:34px;top:742px" width="12" height="10" viewBox="0 0 12 10"><path d="M0 1Q0 0 1 0H4.4L5.6 1.5H11Q12 1.5 12 2.5V9.5H0Z" fill="#b8b8b8"/></svg>
<div class="t" style="left:50px;top:738px">Collections</div>
<div class="trir" style="left:21px;top:759px"></div>
<svg style="left:34px;top:758px" width="12" height="10" viewBox="0 0 12 10"><path d="M0 1Q0 0 1 0H4.4L5.6 1.5H11Q12 1.5 12 2.5V9.5H0Z" fill="#b8b8b8"/></svg>
<div class="t" style="left:50px;top:754px">Custom NUnit</div>
<div class="trir" style="left:21px;top:775px"></div>
<svg style="left:34px;top:774px" width="12" height="10" viewBox="0 0 12 10"><path d="M0 1Q0 0 1 0H4.4L5.6 1.5H11Q12 1.5 12 2.5V9.5H0Z" fill="#b8b8b8"/></svg>
<div class="t" style="left:50px;top:770px">Editor Coroutines</div>
<div class="trir" style="left:21px;top:791px"></div>
<svg style="left:34px;top:790px" width="12" height="10" viewBox="0 0 12 10"><path d="M0 1Q0 0 1 0H4.4L5.6 1.5H11Q12 1.5 12 2.5V9.5H0Z" fill="#b8b8b8"/></svg>
<div class="t" style="left:50px;top:786px">JetBrains Rider Editor</div>
<div class="trir" style="left:21px;top:807px"></div>
<svg style="left:34px;top:806px" width="12" height="10" viewBox="0 0 12 10"><path d="M0 1Q0 0 1 0H4.4L5.6 1.5H11Q12 1.5 12 2.5V9.5H0Z" fill="#b8b8b8"/></svg>
<div class="t" style="left:50px;top:802px">Mathematics</div>
<div class="trir" style="left:21px;top:823px"></div>
<svg style="left:34px;top:822px" width="12" height="10" viewBox="0 0 12 10"><path d="M0 1Q0 0 1 0H4.4L5.6 1.5H11Q12 1.5 12 2.5V9.5H0Z" fill="#b8b8b8"/></svg>
<div class="t" style="left:50px;top:818px">Mono Cecil</div>
<!-- right grid -->
<div class="a" style="left:210px;top:548px;width:606px;height:21px;background:#323232;border-bottom:1px solid #222222"></div>
<div class="t" style="left:214px;top:549px;color:#a8a8a8">Assets</div>
<svg style="left:257px;top:553px" width="7" height="11" viewBox="0 0 7 11"><path d="M1 1L5.5 5.5L1 10" fill="none" stroke="#7a7a7a" stroke-width="1.2"/></svg>
<div class="t b" style="left:269px;top:549px;color:#bcbcbc">Scripts</div>
<div class="a" style="left:210px;top:569px;width:606px;height:248px;background:#282828"></div>
<svg style="left:233px;top:583px" width="48" height="56" viewBox="0 0 48 56"><path d="M4 0H36L48 12V52Q48 56 44 56H4Q0 56 0 52V4Q0 0 4 0Z" fill="#c4c4c4"/><path d="M21.6 11.8L16.6 46.3M30.4 11.8L25.3 46.3M11 22H37M9.2 34.2H35.2" stroke="#1e5a20" stroke-width="4.2"/></svg>
<div class="t" style="left:229px;top:643px;font-size:10.5px;color:#c0c0c0">NetworkC...</div>
<div class="a" style="left:210px;top:817px;width:606px;height:21px;background:#323232;border-top:1px solid #232323"></div>
<div class="a" style="left:745px;top:827px;width:55px;height:1px;background:#6a6a6a"></div>
<div class="a" style="left:771px;top:822px;width:11px;height:11px;border-radius:6px;background:#a8a8a8"></div>
</div>

<!-- STATUS -->
<div id="status">
<div class="a" style="left:1062px;top:840px;width:1px;height:18px;background:#232323"></div>
<div class="a" style="left:1088px;top:840px;width:1px;height:18px;background:#232323"></div>
<div class="a" style="left:1114px;top:840px;width:1px;height:18px;background:#232323"></div>
<div class="a" style="left:1140px;top:840px;width:1px;height:18px;background:#232323"></div>
<svg style="left:1068px;top:842px" width="15" height="15" viewBox="0 0 15 15"><ellipse cx="7.5" cy="9.5" rx="4.3" ry="5" fill="#b4b4b4"/><circle cx="7.5" cy="3.8" r="2.3" fill="#b4b4b4"/><path d="M3.6 6.5L1.2 4.5M11.4 6.5L13.8 4.5M3.2 9.5H0.6M11.8 9.5H14.4M3.6 12.5L1.4 14.5M11.4 12.5L13.6 14.5" stroke="#b4b4b4" stroke-width="1.3"/><path d="M0.5 0.5L14.5 14.5" stroke="#141414" stroke-width="2.6"/><path d="M0.8 0.8L14.2 14.2" stroke="#b4b4b4" stroke-width="1.1"/></svg>
<svg style="left:1094px;top:842px" width="15" height="15" viewBox="0 0 15 15"><ellipse cx="7" cy="3.2" rx="5.8" ry="2.6" fill="#b4b4b4"/><path d="M1.2 5.6Q7 9.4 12.8 5.6V8Q7 11.8 1.2 8Z" fill="#b4b4b4"/><path d="M1.2 10Q7 13.8 12.8 10V12.2Q7 16 1.2 12.2Z" fill="#b4b4b4"/><path d="M1 2L14.5 15" stroke="#141414" stroke-width="2.6"/><path d="M1.3 2.3L14.2 14.7" stroke="#b4b4b4" stroke-width="1.1"/></svg>
<svg style="left:1120px;top:842px" width="15" height="15" viewBox="0 0 15 15"><path d="M2.2 5.5A5.8 5.8 0 0 1 12.3 4M12.8 9.5A5.8 5.8 0 0 1 2.7 11" fill="none" stroke="#b4b4b4" stroke-width="1.4"/><path d="M13.6 1.6L13.2 5.6L9.6 4.4Z M1.4 13.4L1.8 9.4L5.4 10.6Z" fill="#b4b4b4"/><circle cx="7.5" cy="6.6" r="2.7" fill="#b4b4b4"/><rect x="6.2" y="9" width="2.6" height="2.4" fill="#b4b4b4"/><path d="M0.5 0.5L14.5 14.5" stroke="#141414" stroke-width="2.6"/><path d="M0.8 0.8L14.2 14.2" stroke="#b4b4b4" stroke-width="1.1"/></svg>
<svg style="left:1145px;top:842px" width="15" height="15" viewBox="0 0 15 15"><circle cx="7.5" cy="7.5" r="6.3" fill="none" stroke="#c0c0c0" stroke-width="1.1"/><path d="M4.5 7.6L6.7 9.8L10.6 5.6" fill="none" stroke="#c0c0c0" stroke-width="1.4"/></svg>
</div>
</body></html>
